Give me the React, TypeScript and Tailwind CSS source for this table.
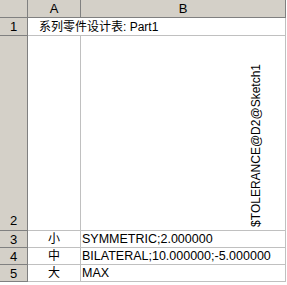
const font = { fontFamily: '"Liberation Sans", Arial, "Noto Sans CJK SC", sans-serif' };

const rows = [
  { n: "3", a: "小", b: "SYMMETRIC;2.000000" },
  { n: "4", a: "中", b: "BILATERAL;10.000000;-5.000000" },
  { n: "5", a: "大", b: "MAX" },
];

export default function App() {
  return (
    <div className="w-[287px] h-[285px] bg-white overflow-hidden text-black" style={font}>
      <div className="grid grid-cols-[28px_53px_205px] grid-rows-[18px_18px_195px_17px_17px_17px] text-[12px] leading-none">
        {/* column headers */}
        <div className="bg-[#d4d0c8] border-r border-b border-[#808080]" />
        <div className="bg-[#d4d0c8] border-r border-b border-[#808080] flex items-center justify-center text-[13px]">A</div>
        <div className="bg-[#d4d0c8] border-r border-b border-[#808080] flex items-center justify-center text-[13px]">B</div>

        {/* row 1 */}
        <div className="bg-[#d4d0c8] border-r border-b border-[#808080] flex items-center justify-center text-[13px]">1</div>
        <div className="col-span-2 border-r border-b border-[#c0c0c0] flex items-center pl-[11px] whitespace-nowrap">
          系列零件设计表: Part1
        </div>

        {/* row 2 */}
        <div className="bg-[#d4d0c8] border-r border-b border-[#808080] flex items-end justify-center pb-[3px] text-[13px]">2</div>
        <div className="border-r border-b border-[#c0c0c0]" />
        <div className="border-r border-b border-[#c0c0c0] flex items-end justify-end pr-[23px] pb-[3px]">
          <span className="[writing-mode:vertical-rl] rotate-180 whitespace-nowrap text-[12px]">$TOLERANCE@D2@Sketch1</span>
        </div>

        {rows.map((r) => (
          <div key={r.n} className="contents">
            <div className="bg-[#d4d0c8] border-r border-b border-[#808080] flex items-center justify-center text-[13px]">{r.n}</div>
            <div className="border-r border-b border-[#c0c0c0] flex items-center justify-center">{r.a}</div>
            <div className="border-r border-b border-[#c0c0c0] flex items-center pl-[1px] whitespace-nowrap text-[12.5px]">{r.b}</div>
          </div>
        ))}
      </div>
    </div>
  );
}
